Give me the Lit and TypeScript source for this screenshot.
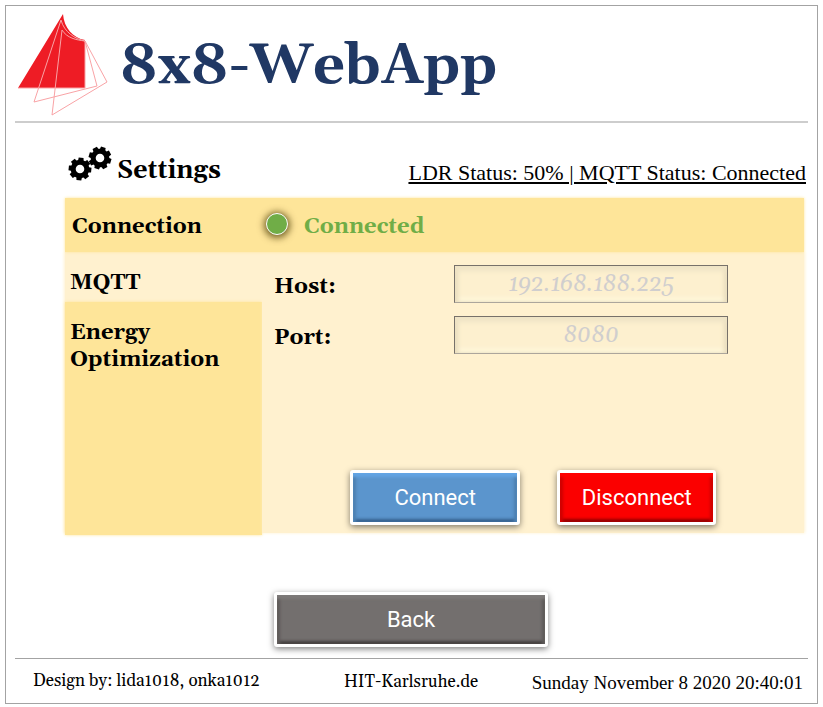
import { LitElement, html, css, svg } from "lit";
import { customElement, property } from "lit/decorators.js";

const SERIF = css`Gelasio, "Liberation Serif", serif`;

/** Eight-toothed gear outline centred on the origin. */
function gearPath(outer: number, root: number, hole: number, turn: number): string {
  const teeth = 8;
  const step = (Math.PI * 2) / teeth;
  const points: string[] = [];
  for (let i = 0; i < teeth; i++) {
    const a = i * step + turn;
    const corners: [number, number][] = [
      [root, -0.3],
      [outer, -0.21],
      [outer, 0.21],
      [root, 0.3],
    ];
    for (const [r, d] of corners) {
      points.push(`${(r * Math.cos(a + d)).toFixed(2)} ${(r * Math.sin(a + d)).toFixed(2)}`);
    }
  }
  return `M${points.join("L")}Z M${hole} 0A${hole} ${hole} 0 1 0 ${-hole} 0A${hole} ${hole} 0 1 0 ${hole} 0Z`;
}

@customElement("sail-logo")
export class SailLogo extends LitElement {
  static styles = css`
    :host { display: block; }
    svg { display: block; }
  `;
  render() {
    return html`<svg width="92" height="104" viewBox="0 0 92 104" aria-hidden="true">
      <path d="M46 1C47 15 56 25 68 27V75H1Z" fill="#ee1c25" />
      <g fill="none" stroke="#f9a3a6" stroke-width="1">
        <path d="M1 75H68V28" />
        <path d="M44 7C47 19 58 26 68 28L80 73L17 89Z" />
        <path d="M45 17C50 25 59 27 68 28L90 69L35 102Z" />
      </g>
    </svg>`;
  }
}

@customElement("gears-icon")
export class GearsIcon extends LitElement {
  static styles = css`
    :host { display: block; }
    svg { display: block; }
  `;
  render() {
    const gear = (x: number, y: number, turn: number) => svg`
      <path transform="translate(${x} ${y})" fill-rule="evenodd" d=${gearPath(11.6, 9.3, 4.3, turn)} />`;
    return html`<svg width="44" height="36" viewBox="0 0 44 36" aria-hidden="true">
      ${gear(12, 23, 0.1)}${gear(32, 12, 0.3)}
    </svg>`;
  }
}

@customElement("bevel-button")
export class BevelButton extends LitElement {
  @property() label = "";
  @property({ reflect: true }) tone = "blue";
  static styles = css`
    :host { display: block; }
    .button {
      display: block;
      box-sizing: border-box;
      width: 100%;
      height: 55px;
      padding: 0;
      border: 3px solid #fff;
      border-radius: 3px;
      color: #fff;
      font: 22px/32px Roboto, sans-serif;
      background: #5b95cd;
      box-shadow: 0 2px 6px rgba(0, 0, 0, 0.5), inset 0 5px 3px -1px #62a4e4,
        inset 4px 0 3px -1px #4d7fb0, inset -4px 0 3px -1px #4d7fb0, inset 0 -4px 3px -1px #35618d;
    }
    :host([tone="red"]) .button {
      background: #fb0000;
      box-shadow: 0 2px 6px rgba(0, 0, 0, 0.5), inset 0 5px 3px -1px #ff0000,
        inset 4px 0 3px -1px #cc0000, inset -4px 0 3px -1px #cc0000, inset 0 -4px 3px -1px #900000;
    }
    :host([tone="gray"]) .button {
      background: #736f6e;
      box-shadow: 0 2px 6px rgba(0, 0, 0, 0.5), inset 0 5px 3px -1px #7c7978,
        inset 4px 0 3px -1px #5e5a59, inset -4px 0 3px -1px #5e5a59, inset 0 -4px 3px -1px #433f3e;
    }
  `;
  render() {
    return html`<button type="button" class="button">${this.label}</button>`;
  }
}

@customElement("app-root")
export class AppRoot extends LitElement {
  static styles = css`
    :host {
      display: block;
      box-sizing: border-box;
      padding: 5px 5px 3px;
      background: #fff;
      color: #000;
      font-family: ${SERIF};
    }
    .frame {
      border: 1px solid #a3a3a3;
      padding: 0 9px;
    }
    .header {
      display: flex;
      align-items: center;
      gap: 11px;
      height: 113px;
      padding: 2px 0 0 2px;
      border-bottom: 2px solid #cdcdcd;
    }
    .title {
      margin: 0;
      padding-top: 4px;
      color: #203864;
      font-size: 56px;
      line-height: 64px;
    }
    .content { padding: 22px 2px 11px 50px; }
    .heading {
      display: flex;
      align-items: flex-start;
      justify-content: space-between;
    }
    .settings {
      display: flex;
      align-items: flex-start;
      gap: 5px;
      padding-left: 3px;
    }
    .settings gears-icon { margin-top: 1px; }
    .settings h2 {
      margin: 10px 0 0;
      font-size: 25px;
      line-height: 32px;
    }
    .status {
      margin: 14px 0 0;
      font-family: "Liberation Serif", serif;
      font-size: 22px;
      line-height: 28px;
      text-decoration: underline;
    }
    .panel {
      display: grid;
      grid-template-columns: 197px 1fr;
      grid-template-rows: 54px 281px;
      margin: 11px 2px 0 0;
      font-size: 22px;
      line-height: 27px;
      font-weight: bold;
    }
    .band {
      grid-column: 1 / -1;
      display: grid;
      grid-template-columns: subgrid;
      align-items: center;
      box-sizing: border-box;
      padding-top: 5px;
      background: #fee599;
      box-shadow: 0 0 3px #fee599;
      z-index: 1;
    }
    .band h3 {
      margin: 0 0 0 7px;
      font-size: 22px;
    }
    .state {
      display: flex;
      align-items: center;
      gap: 16px;
      padding-left: 4px;
      color: #70ad47;
    }
    .dot {
      width: 20px;
      height: 20px;
      margin-bottom: 8px;
      border: 1px solid #fff;
      border-radius: 50%;
      background: #70ad47;
      box-shadow: 0 1px 7px 2px rgba(70, 55, 0, 0.75);
    }
    .nav {
      display: flex;
      flex-direction: column;
      background: #fff1cf;
      box-shadow: -1px 0 3px #fff1cf;
    }
    .nav a {
      color: inherit;
      text-decoration: none;
      padding: 18px 5px 0;
    }
    .nav .current { height: 32px; }
    .nav .other {
      flex: 1;
      margin-bottom: -2px;
      background: #fee599;
      box-shadow: 0 0 3px #fee599;
    }
    .form {
      display: flex;
      flex-direction: column;
      justify-content: space-between;
      padding: 13px 0 8px 12px;
      background: #fff1cf;
      box-shadow: 1px 0 3px #fff1cf;
    }
    .fields {
      display: grid;
      grid-template-columns: 180px 1fr;
      row-gap: 13px;
      padding-right: 76px;
      align-items: center;
    }
    .fields label { padding-top: 6px; }
    .fields input {
      box-sizing: border-box;
      width: 100%;
      height: 38px;
      padding: 0;
      border: 1px solid #77716a;
      border-bottom-color: #aca69c;
      border-radius: 0;
      background: #fdf0cf;
      box-shadow: inset 0 6px 5px -1px #efe4c6, inset 4px 0 4px -1px #e8dcbd,
        inset -4px 0 4px -1px #e8dcbd, inset 0 -5px 4px -1px #fff8dd;
      font: italic 23px/30px ${SERIF};
      text-align: center;
    }
    .fields input::placeholder { color: #d0cece; opacity: 1; }
    .actions {
      display: grid;
      grid-template-columns: 171fr 159fr;
      gap: 37px;
      padding: 0 88px 0 76px;
    }
    .back {
      width: 37%;
      margin: 59px auto 0 209px;
    }
    .footer {
      display: grid;
      grid-template-columns: 311px 1fr auto;
      align-items: center;
      height: 44px;
      padding: 0 5px 0 18px;
      border-top: 1px solid #a3a3a3;
      font-size: 17px;
      line-height: 24px;
    }
    .clock {
      padding-top: 4px;
      font-family: "Liberation Serif", serif;
      font-size: 19px;
    }
    .footer a { color: inherit; text-decoration: none; padding-top: 2px; }
  `;

  render() {
    return html`<div class="frame">
      <header class="header">
        <sail-logo></sail-logo>
        <h1 class="title">8x8-WebApp</h1>
      </header>
      <main class="content">
        <div class="heading">
          <div class="settings">
            <gears-icon></gears-icon>
            <h2>Settings</h2>
          </div>
          <p class="status">LDR Status: 50% | MQTT Status: Connected</p>
        </div>
        <section class="panel">
          <div class="band">
            <h3>Connection</h3>
            <div class="state" role="status"><span class="dot"></span>Connected</div>
          </div>
          <nav class="nav">
            <a class="current" href="#mqtt" aria-current="page">MQTT</a>
            <a class="other" href="#energy">Energy<br />Optimization</a>
          </nav>
          <form class="form">
            <div class="fields">
              <label for="host">Host:</label>
              <input id="host" type="text" placeholder="192.168.188.225" />
              <label for="port">Port:</label>
              <input id="port" type="text" placeholder="8080" />
            </div>
            <div class="actions">
              <bevel-button label="Connect" tone="blue"></bevel-button>
              <bevel-button label="Disconnect" tone="red"></bevel-button>
            </div>
          </form>
        </section>
        <bevel-button class="back" label="Back" tone="gray"></bevel-button>
      </main>
      <footer class="footer">
        <span>Design by: lida1018, onka1012</span>
        <a href="#hit">HIT-Karlsruhe.de</a>
        <time class="clock" datetime="2020-11-08T20:40:01">Sunday November 8 2020 20:40:01</time>
      </footer>
    </div>`;
  }
}
